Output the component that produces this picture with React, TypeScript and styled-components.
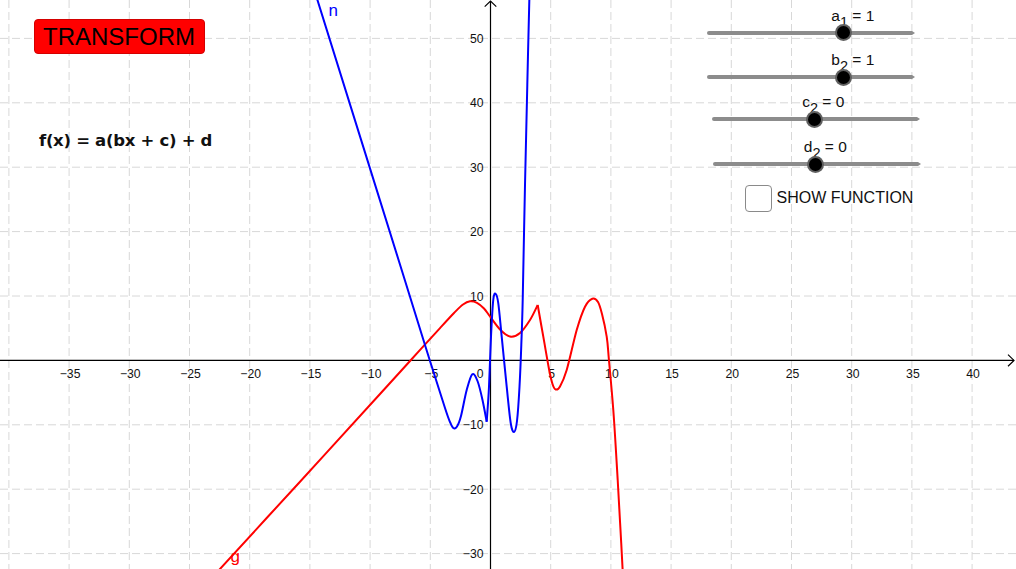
import { FC } from "react"
import styled, { createGlobalStyle } from "styled-components"

const GlobalStyle = createGlobalStyle`
  html, body {
    margin: 0;
    padding: 0;
    background: #fff;
  }
`

// graph coords -> pixels
const X0 = 490.5
const Y0 = 360.4
const UX = 12.04
const UY = 6.44
const W = 1016
const H = 569

type Pt = [number, number]

// catmull-rom through the traced points
const smoothPath = (pts: Pt[]) => {
  let d = `M${pts[0][0]},${pts[0][1]}`
  for (let i = 0; i < pts.length - 1; i++) {
    const p0 = pts[i - 1] || pts[i]
    const p1 = pts[i]
    const p2 = pts[i + 1]
    const p3 = pts[i + 2] || p2
    const c1x = p1[0] + (p2[0] - p0[0]) / 6
    const c1y = p1[1] + (p2[1] - p0[1]) / 6
    const c2x = p2[0] - (p3[0] - p1[0]) / 6
    const c2y = p2[1] - (p3[1] - p1[1]) / 6
    d += ` C${c1x.toFixed(1)},${c1y.toFixed(1)} ${c2x.toFixed(1)},${c2y.toFixed(1)} ${p2[0]},${p2[1]}`
  }
  return d
}

const redA: Pt[] = [
  [214, 575.5], [300, 481.7], [380, 394], [410, 361], [440, 328.1], [454, 313],
  [463, 304.5], [470, 301.3], [477, 302.8], [484, 308.5], [490, 316.5], [500, 329.5],
  [510, 336.5], [520, 333], [530, 320], [537.7, 305],
]
const redB: Pt[] = [
  [537.7, 305], [543.3, 336.7], [549, 369], [552.5, 384], [555.7, 389.5], [560, 386.5],
  [566.7, 370], [576.7, 330], [585, 306.7], [592.3, 298.7], [598, 302], [602, 314],
  [606.7, 336.7], [609, 360.7], [613.3, 410], [617.7, 480], [620.5, 530], [622.8, 573],
]
const blueA: Pt[] = [
  [316.5, -3], [401.7, 270], [430, 361], [445, 408], [450, 422], [453.3, 428],
  [457, 426.5], [461, 416], [466.7, 390], [472.3, 374.3], [477.5, 381], [482.5, 400],
  [486.7, 421.7],
]
const blueB: Pt[] = [
  [486.7, 421.7], [489, 386.7], [491, 336.7], [493.3, 299.5], [495.7, 294], [498.3, 303.3],
  [501.7, 336.7], [506.7, 386.7], [510.7, 423], [514, 432], [517, 421], [519.5, 386.7],
  [521.3, 345], [522.7, 300], [525, 185], [527.3, 85], [529.4, -3],
]

const xTicks = [-35, -30, -25, -20, -15, -10, -5, 5, 10, 15, 20, 25, 30, 35, 40]
const yTicks = [-30, -20, -10, 10, 20, 30, 40, 50]
const xGrid = [-40, -35, -30, -25, -20, -15, -10, -5, 5, 10, 15, 20, 25, 30, 35, 40]
const yGrid = [-30, -20, -10, 10, 20, 30, 40, 50]

const fmt = (n: number) => (n < 0 ? `\u2212${-n}` : `${n}`)

const Stage = styled.div`
  display: grid;
  width: ${W}px;
  height: ${H}px;
  overflow: hidden;
  background: #fff;
  font-family: "Liberation Sans", Arial, sans-serif;
  color: #000;

  & > * {
    grid-area: 1 / 1;
  }
`

const Graph = styled.svg`
  display: block;
  width: ${W}px;
  height: ${H}px;

  & text {
    font-family: "Liberation Sans", Arial, sans-serif;
  }
`

const LeftPanel = styled.div`
  align-self: start;
  justify-self: start;
  display: flex;
  flex-direction: column;
  align-items: flex-start;
  margin: 18.5px 0 0 33.5px;
`

const TransformButton = styled.button`
  box-sizing: border-box;
  width: 171px;
  height: 35px;
  padding: 0 0 1px;
  background: #ff0000;
  border: 1px solid #d40000;
  border-radius: 4px;
  font-family: "Liberation Sans", Arial, sans-serif;
  font-size: 24px;
  line-height: 33px;
  color: #000;
  cursor: pointer;
`

const Formula = styled.div`
  margin: 78.5px 0 0 5.5px;
  font-family: "DejaVu Sans", sans-serif;
  font-weight: bold;
  font-size: 16.5px;
  line-height: 17px;
  letter-spacing: -0.3px;
  white-space: pre;
  color: #111;
`

const RightPanel = styled.div`
  align-self: start;
  justify-self: start;
  margin-left: 706px;
  display: flex;
  flex-direction: column;
  width: 220px;
`

const SliderRow = styled.div<{ $h: number }>`
  position: relative;
  height: ${(p) => p.$h}px;
`

const Track = styled.div<{ $shift: number }>`
  position: absolute;
  top: 30.7px;
  left: ${(p) => p.$shift}px;
  width: 205px;
  height: 4px;
  border-radius: 2px 0 0 2px;
  background: #8c8c8c;

  &::after {
    content: "";
    position: absolute;
    right: -3px;
    top: 0;
    border-left: 3px solid #8c8c8c;
    border-top: 2px solid transparent;
    border-bottom: 2px solid transparent;
  }
`

const Knob = styled.div`
  position: absolute;
  top: 50%;
  width: 13px;
  height: 13px;
  margin: -8.5px 0 0 -8.5px;
  border-radius: 50%;
  background: #000;
  border: 2px solid rgba(105, 105, 105, 0.9);
`

const SliderLabel = styled.div`
  position: absolute;
  bottom: 11px;
  white-space: pre;
  font-size: 15.5px;
  line-height: 15px;
  color: #111;

  & sub {
    font-size: 14.5px;
    vertical-align: baseline;
    position: relative;
    top: 6px;
  }
`

const CheckRow = styled.label`
  display: flex;
  align-items: center;
  gap: 5px;
  margin: 9px 0 0 38.5px;
  font-size: 16px;
  color: #111;
`

const CheckBox = styled.span`
  box-sizing: border-box;
  width: 27px;
  height: 27px;
  border: 1px solid #8a8a8a;
  border-radius: 4px;
  background: #fff;
`

type SliderProps = { name: string; value: number; shift: number; h: number }

const Slider: FC<SliderProps> = ({ name, value, shift, h }) => {
  const pos = ((value + 3) / 6) * 205
  return (
    <SliderRow $h={h}>
      <Track $shift={shift}>
        <SliderLabel style={{ left: pos - 12 }}>
          {name}
          <sub>{name === "a" ? "1" : "2"}</sub>
          {` = ${value}`}
        </SliderLabel>
        <Knob style={{ left: pos }} />
      </Track>
    </SliderRow>
  )
}

const GraphView: FC = () => {
  const gx = (v: number) => X0 + v * UX
  const gy = (v: number) => Y0 - v * UY
  return (
    <Graph viewBox={`0 0 ${W} ${H}`}>
      <g stroke="#d8d8d8" strokeWidth={1} strokeDasharray="8 4">
        {xGrid.map((v) => (
          <line key={"gx" + v} x1={gx(v)} y1={0} x2={gx(v)} y2={H} />
        ))}
        {yGrid.map((v) => (
          <line key={"gy" + v} x1={0} y1={gy(v)} x2={W} y2={gy(v)} />
        ))}
      </g>
      <g stroke="#000" strokeWidth={1.2} fill="none">
        <line x1={0} y1={Y0} x2={1014} y2={Y0} />
        <line x1={X0} y1={H} x2={X0} y2={1} />
        <polyline points={`1008,354.6 1014,${Y0} 1008,366.2`} />
        <polyline points={`484.7,6.6 ${X0},1 496.3,6.6`} />
      </g>
      <g fontSize={12.2} fill="#111">
        {xTicks.map((v) => (
          <text key={"tx" + v} x={gx(v) + 1} y={378} textAnchor="middle">
            {fmt(v)}
          </text>
        ))}
        <text x={483.5} y={378} textAnchor="end">
          0
        </text>
        {yTicks.map((v) => (
          <text key={"ty" + v} x={483.5} y={gy(v) + 4.6} textAnchor="end">
            {fmt(v)}
          </text>
        ))}
      </g>
      <g fill="none" strokeWidth={2} strokeLinejoin="round">
        <path d={smoothPath(redA)} stroke="#ff0000" />
        <path d={smoothPath(redB)} stroke="#ff0000" />
        <path d={smoothPath(blueA)} stroke="#0000ff" />
        <path d={smoothPath(blueB)} stroke="#0000ff" />
      </g>
      <text x={328.5} y={16} fontSize={17} fill="#0000ff">
        n
      </text>
      <text x={230.5} y={561.5} fontSize={17} fill="#ff0000">
        g
      </text>
    </Graph>
  )
}

const App: FC = () => {
  return (
    <>
      <GlobalStyle />
      <Stage>
        <GraphView />
        <LeftPanel>
          <TransformButton>TRANSFORM</TransformButton>
          <Formula>{"f(x) = a(bx + c) + d"}</Formula>
        </LeftPanel>
        <RightPanel>
          <Slider name="a" value={1} shift={0.7} h={44.5} />
          <Slider name="b" value={1} shift={0.7} h={42} />
          <Slider name="c" value={0} shift={5.7} h={45} />
          <Slider name="d" value={0} shift={7.3} h={44} />
          <CheckRow>
            <CheckBox />
            SHOW FUNCTION
          </CheckRow>
        </RightPanel>
      </Stage>
    </>
  )
}

export default App
